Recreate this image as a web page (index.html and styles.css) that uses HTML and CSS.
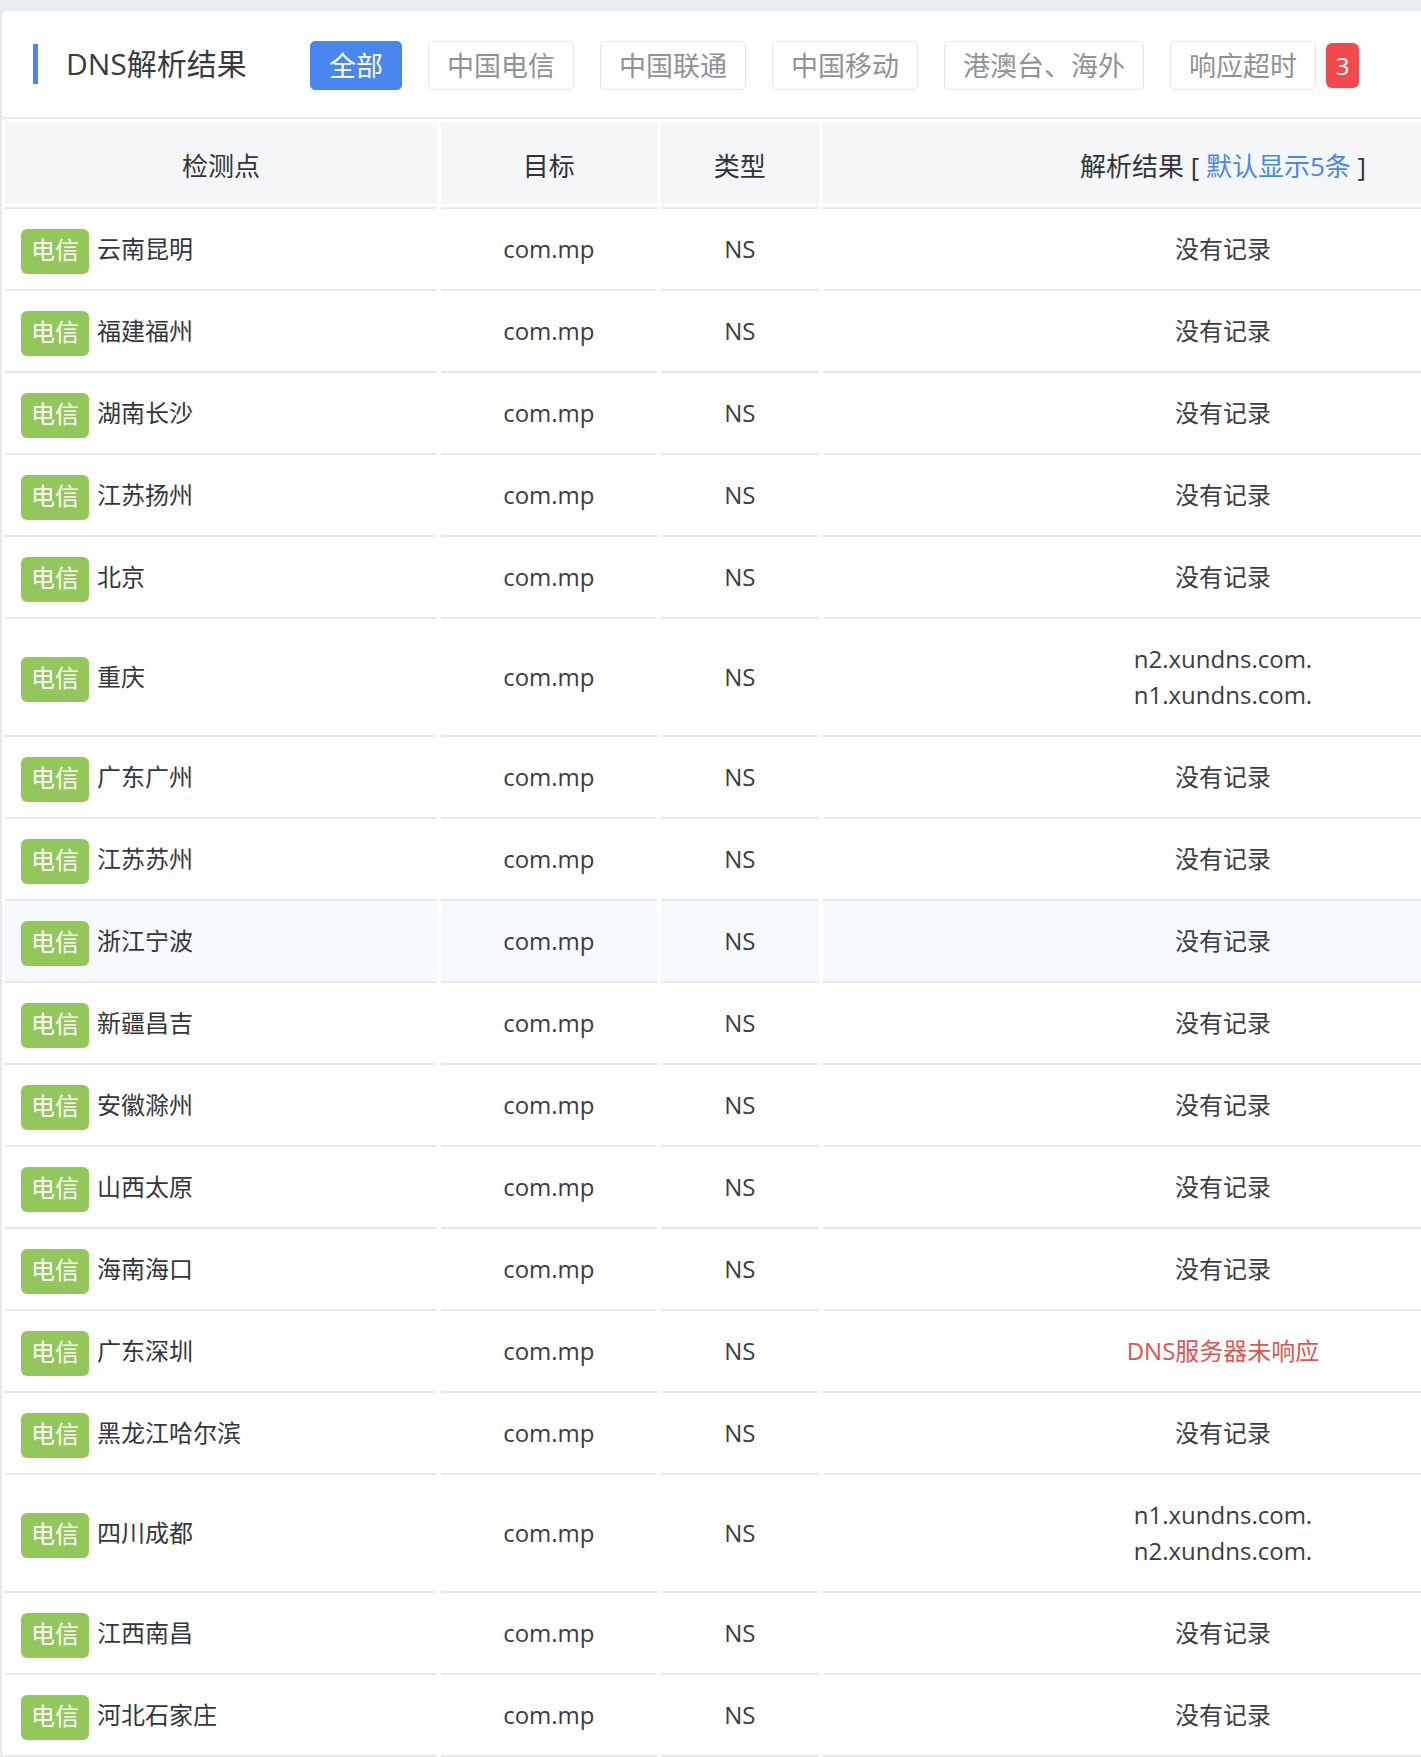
FILE: index.html
```html
<!DOCTYPE html>
<html lang="zh-CN">
<head>
<meta charset="utf-8">
<title>DNS解析结果</title>
<link rel="stylesheet" href="styles.css">
</head>
<body>
<div class="page">
  <section class="card">
    <header class="card-head">
      <h2 class="title">DNS解析结果</h2>
      <nav class="filters">
        <span class="btn active">全部</span>
        <span class="btn">中国电信</span>
        <span class="btn">中国联通</span>
        <span class="btn">中国移动</span>
        <span class="btn">港澳台、海外</span>
        <span class="btn-wrap"><span class="btn">响应超时</span><span class="badge">3</span></span>
      </nav>
    </header>
    <table class="result">
      <colgroup>
        <col class="c1"><col class="c2"><col class="c3"><col class="c4">
      </colgroup>
      <thead>
        <tr><th>检测点</th><th>目标</th><th>类型</th><th>解析结果 [ <a class="more">默认显示5条</a> ]</th></tr>
      </thead>
      <tbody>
        <tr><td class="loc"><span class="tag">电信</span>云南昆明</td><td>com.mp</td><td>NS</td><td>没有记录</td></tr>
        <tr><td class="loc"><span class="tag">电信</span>福建福州</td><td>com.mp</td><td>NS</td><td>没有记录</td></tr>
        <tr><td class="loc"><span class="tag">电信</span>湖南长沙</td><td>com.mp</td><td>NS</td><td>没有记录</td></tr>
        <tr><td class="loc"><span class="tag">电信</span>江苏扬州</td><td>com.mp</td><td>NS</td><td>没有记录</td></tr>
        <tr><td class="loc"><span class="tag">电信</span>北京</td><td>com.mp</td><td>NS</td><td>没有记录</td></tr>
        <tr><td class="loc"><span class="tag">电信</span>重庆</td><td>com.mp</td><td>NS</td><td>n2.xundns.com.<br>n1.xundns.com.</td></tr>
        <tr><td class="loc"><span class="tag">电信</span>广东广州</td><td>com.mp</td><td>NS</td><td>没有记录</td></tr>
        <tr><td class="loc"><span class="tag">电信</span>江苏苏州</td><td>com.mp</td><td>NS</td><td>没有记录</td></tr>
        <tr class="hover"><td class="loc"><span class="tag">电信</span>浙江宁波</td><td>com.mp</td><td>NS</td><td>没有记录</td></tr>
        <tr><td class="loc"><span class="tag">电信</span>新疆昌吉</td><td>com.mp</td><td>NS</td><td>没有记录</td></tr>
        <tr><td class="loc"><span class="tag">电信</span>安徽滁州</td><td>com.mp</td><td>NS</td><td>没有记录</td></tr>
        <tr><td class="loc"><span class="tag">电信</span>山西太原</td><td>com.mp</td><td>NS</td><td>没有记录</td></tr>
        <tr><td class="loc"><span class="tag">电信</span>海南海口</td><td>com.mp</td><td>NS</td><td>没有记录</td></tr>
        <tr><td class="loc"><span class="tag">电信</span>广东深圳</td><td>com.mp</td><td>NS</td><td class="err">DNS服务器未响应</td></tr>
        <tr><td class="loc"><span class="tag">电信</span>黑龙江哈尔滨</td><td>com.mp</td><td>NS</td><td>没有记录</td></tr>
        <tr><td class="loc"><span class="tag">电信</span>四川成都</td><td>com.mp</td><td>NS</td><td>n1.xundns.com.<br>n2.xundns.com.</td></tr>
        <tr><td class="loc"><span class="tag">电信</span>江西南昌</td><td>com.mp</td><td>NS</td><td>没有记录</td></tr>
        <tr><td class="loc"><span class="tag">电信</span>河北石家庄</td><td>com.mp</td><td>NS</td><td>没有记录</td></tr>
      </tbody>
    </table>
  </section>
</div>
</body>
</html>
```
FILE: styles.css
```css
html, body {
  margin: 0;
  padding: 0;
  overflow: hidden;
  background: #eaedf1;
}
body {
  font-family: "Open Sans", "Noto Sans CJK SC", sans-serif;
  color: #333;
}
.page {
  padding-top: 10px;
  width: 1700px;
}
.card {
  margin-left: 1px;
  width: 1640px;
  background: #fff;
  border: 1px solid #e2e5e9;
  border-radius: 5px;
}
.card-head {
  display: flex;
  align-items: center;
  height: 106px;
  padding-left: 31px;
  border-bottom: 2px solid #e8ebee;
}
.title {
  margin: 0;
  padding-left: 28px;
  border-left: 5px solid #4a86f0;
  height: 40px;
  line-height: 40px;
  font-size: 30px;
  font-weight: 400;
  color: #363b42;
  width: 216px;
}
.filters {
  display: flex;
  align-items: center;
  gap: 26px;
  margin-left: 28px;
  padding-top: 2px;
}
.btn-wrap {
  display: flex;
  align-items: center;
  gap: 10px;
}
.btn {
  display: inline-block;
  height: 47px;
  line-height: 47px;
  padding: 0 18px;
  font-size: 27px;
  color: #8d939b;
  border: 1px solid #e3e6ea;
  border-radius: 5px;
  background: #fff;
}
.btn.active {
  background: #4a86f0;
  border-color: #4a86f0;
  color: #fff;
}
.badge {
  display: inline-block;
  width: 33px;
  height: 45px;
  line-height: 45px;
  text-align: center;
  font-size: 24px;
  color: #fff;
  background: #f24a4c;
  border-radius: 6px;
}
.result {
  table-layout: fixed;
  border-collapse: separate;
  border-spacing: 4px 0;
  margin-top: 3px;
  margin-left: -1px;
  width: 1626px;
}
.c1 { width: 431px; }
.c2 { width: 215px; }
.c3 { width: 158px; }
.c4 { width: 798px; }
.result th {
  background: #f5f6f7;
  background-clip: padding-box;
  border-bottom: 3px solid transparent;
  padding: 26px 0 20px;
  line-height: 36px;
  font-size: 26px;
  font-weight: 400;
  color: #30343a;
  text-align: center;
}
.more {
  color: #4a86f0;
  text-decoration: none;
}
.result td {
  border-top: 2px solid #e7eaed;
  padding: 22px 0;
  line-height: 36px;
  height: 36px;
  font-size: 24px;
  color: #3a3d42;
  text-align: center;
  vertical-align: middle;
}
.result tbody tr:last-child td {
  border-bottom: 2px solid #e7eaed;
}
.result td.loc {
  text-align: left;
  padding-left: 16px;
  color: #33373d;
}
.result td.err {
  color: #e05353;
}
.result tr.hover td {
  background: #f6f9fd;
}
.tag {
  display: inline-block;
  height: 45px;
  line-height: 40px;
  margin: -9px 8px -9px 0;
  padding: 0 10px;
  border-radius: 6px;
  background: #93c75b;
  color: #fff;
  font-family: "Noto Sans CJK SC", sans-serif;
  font-size: 24px;
  vertical-align: middle;
}
```
